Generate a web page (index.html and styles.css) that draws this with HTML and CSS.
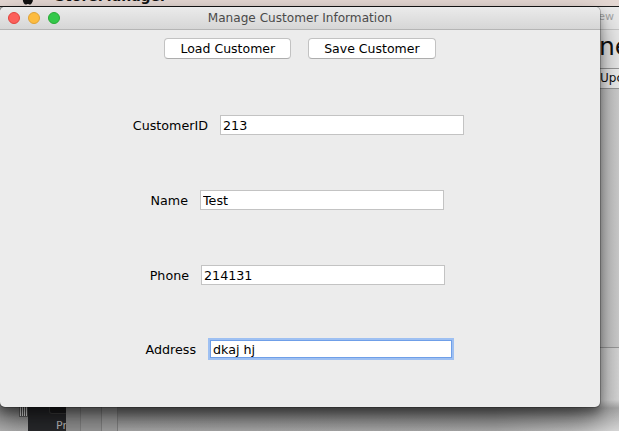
FILE: index.html
```html
<!DOCTYPE html>
<html>
<head>
<meta charset="utf-8">
<title>Manage Customer Information</title>
<link rel="stylesheet" href="styles.css">
</head>
<body>
<div class="menubar">
  <svg class="apple" width="12" height="14" viewBox="0 0 12 14"><path d="M6 3.5C7.5 2.6 9.6 2.8 10.7 4.3 9.2 5.3 9.4 7.6 11 8.4 10.5 10 9.4 12.4 8 12.5 7 12.6 6.8 12 5.9 12 5 12 4.7 12.6 3.8 12.6 2.3 12.6 0.6 9.6 0.8 7 1 4.2 3.6 2.4 6 3.5Z" fill="#111"/></svg>
  <span class="appname">StoreManager</span>
</div>

<div class="backwin">
  <div class="backwin-title">View</div>
  <div class="backwin-head">ne</div>
  <div class="backwin-row">Upc</div>
  <div class="backwin-body"></div>
</div>

<div class="dock">
  <div class="dock-icon"></div>
  <div class="dock-dark"><div class="dock-tab"></div><span class="dock-text">Pr</span></div>
  <div class="dock-col c1"></div>
  <div class="dock-col c2"></div>
  <div class="dock-col c3"></div>
</div>

<div class="window">
  <div class="titlebar">
    <div class="lights">
      <span class="light red"></span>
      <span class="light yellow"></span>
      <span class="light green"></span>
    </div>
    <div class="title">Manage Customer Information</div>
  </div>
  <div class="content">
    <div class="toolbar">
      <button class="btn">Load Customer</button>
      <button class="btn">Save Customer</button>
    </div>
    <div class="form">
      <div class="row row-id">
        <label class="lbl">CustomerID</label>
        <input class="field" type="text" value="213">
      </div>
      <div class="row row-name">
        <label class="lbl">Name</label>
        <input class="field" type="text" value="Test">
      </div>
      <div class="row row-phone">
        <label class="lbl">Phone</label>
        <input class="field" type="text" value="214131">
      </div>
      <div class="row row-address">
        <label class="lbl">Address</label>
        <input class="field focused" type="text" value="dkaj hj">
      </div>
    </div>
  </div>
</div>
</body>
</html>
```

FILE: styles.css
```css
html, body {
  margin: 0;
  padding: 0;
}
body {
  width: 619px;
  height: 431px;
  overflow: hidden;
  position: relative;
  background:
    linear-gradient(180deg, rgba(0, 0, 0, 0) 400px, rgba(0, 0, 0, 0.22) 408px, rgba(0, 0, 0, 0) 431px),
    linear-gradient(90deg, #b4b4b4 0%, #b8b8b8 80%, #d8d8d8 100%);
  font-family: "DejaVu Sans", "Liberation Sans", sans-serif;
}

/* menu bar */
.menubar {
  position: absolute;
  left: 0;
  top: 0;
  width: 619px;
  height: 6px;
  background: #e6d9d4;
  border-bottom: 1px solid #1c1c1c;
  overflow: hidden;
}
.apple {
  position: absolute;
  left: 22px;
  top: -8px;
}
.appname {
  position: absolute;
  left: 55px;
  top: -12px;
  font-weight: bold;
  font-size: 14px;
  line-height: 16px;
  color: #111;
}

/* back window on the right */
.backwin {
  position: absolute;
  left: 560px;
  top: 7px;
  width: 120px;
  height: 340px;
  display: flex;
  flex-direction: column;
  border-bottom: 1px solid #9c9c9c;
  background: linear-gradient(90deg, #c4c4c4, #dcdcdc);
}
.backwin-title {
  height: 22px;
  padding-left: 28px;
  font-size: 11px;
  line-height: 20px;
  color: #a6a6a6;
  background: #ececec;
  border-bottom: 1px solid #c9c9c9;
}
.backwin-head {
  height: 38px;
  padding-left: 39px;
  font-size: 25px;
  line-height: 34px;
  color: #111;
  background: #ececec;
}
.backwin-row {
  height: 19px;
  padding-left: 40px;
  font-size: 12px;
  line-height: 19px;
  color: #111;
  background: #f2f2f2;
  border-top: 1px solid #9a9a9a;
  border-bottom: 1px solid #9a9a9a;
}
.backwin-body {
  flex: 1;
}

/* dock pieces at the bottom left */
.dock {
  position: absolute;
  left: 0;
  top: 400px;
  width: 120px;
  height: 31px;
}
.dock-icon {
  position: absolute;
  left: 19px;
  top: 4px;
  width: 8px;
  height: 11px;
  background: repeating-linear-gradient(90deg, #f4f4f4 0 1px, #555 1px 2px);
  border: 1px solid #666;
}
.dock-dark {
  position: absolute;
  left: 28px;
  top: 0;
  width: 38px;
  height: 31px;
  background: #2a2b2e;
}
.dock-tab {
  position: absolute;
  left: 21px;
  top: 0;
  width: 17px;
  height: 13px;
  border-radius: 0 0 3px 3px;
  background: #1d1e20;
  border: 1px solid #444;
  border-top: none;
}
.dock-text {
  position: absolute;
  left: 28px;
  top: 19px;
  font-size: 11px;
  color: #c8c8c8;
}
.dock-col {
  position: absolute;
  top: 0;
  height: 31px;
  border-right: 1px solid #8a8a8a;
}
.c1 { left: 66px; width: 14px; background: #9c9c9c; }
.c2 { left: 81px; width: 20px; background: #a2a2a2; }
.c3 { left: 102px; width: 15px; background: #aaaaaa; }

/* main window */
.window {
  position: absolute;
  left: 0;
  top: 7px;
  width: 600px;
  height: 400px;
  border-radius: 5px;
  overflow: hidden;
  background: #ececec;
  box-shadow: 0 0 0 1px rgba(0, 0, 0, 0.22), 0 6px 10px rgba(0, 0, 0, 0.3), 0 14px 30px rgba(0, 0, 0, 0.5);
  display: flex;
  flex-direction: column;
}
.titlebar {
  height: 22px;
  flex: none;
  position: relative;
  background: linear-gradient(#ebebeb, #d6d6d6);
  border-bottom: 1px solid #b5b5b5;
  display: flex;
  align-items: center;
  justify-content: center;
}
.lights {
  position: absolute;
  left: 8px;
  top: 5px;
  display: flex;
  gap: 8px;
}
.light {
  width: 12px;
  height: 12px;
  border-radius: 50%;
  box-sizing: border-box;
}
.red { background: #fc605b; border: 1px solid #e0443e; }
.yellow { background: #fdbc40; border: 1px solid #dea236; }
.green { background: #34c84a; border: 1px solid #27aa35; }
.title {
  font-size: 12.1px;
  color: #4a4a4a;
  line-height: 22px;
}

.content {
  flex: 1;
  display: flex;
  flex-direction: column;
  padding-top: 8px;
}
.toolbar {
  display: flex;
  justify-content: center;
  gap: 17px;
}
.btn {
  height: 21px;
  padding: 0 15px;
  margin: 0;
  font-family: "DejaVu Sans", "Liberation Sans", sans-serif;
  font-size: 12.5px;
  color: #000;
  background: #ffffff;
  border: 1px solid #c2c2c2;
  border-bottom-color: #adadad;
  border-radius: 4px;
}

.form {
  display: flex;
  flex-direction: column;
  gap: 55px;
  padding-top: 56px;
}
.row {
  display: flex;
  align-items: center;
  gap: 12px;
  height: 20px;
}
.lbl {
  width: 80px;
  text-align: right;
  font-size: 12.7px;
  color: #000;
}
.row-id { padding-left: 128px; }
.row-name { padding-left: 108px; }
.row-phone { padding-left: 109px; }
.row-address { padding-left: 116px; margin-top: -1px; }
.field {
  box-sizing: border-box;
  width: 244px;
  height: 20px;
  margin: 0;
  padding: 0 2px;
  font-family: "DejaVu Sans", "Liberation Sans", sans-serif;
  font-size: 12.7px;
  color: #000;
  background: #fff;
  border: 1px solid #c3c3c3;
  border-radius: 0;
  outline: none;
}
.field.focused {
  width: 242px;
  height: 18px;
  margin-left: 2px;
  border-color: #6f9fe8;
  box-shadow: 0 0 0 2px #9ec0f2;
}
```
